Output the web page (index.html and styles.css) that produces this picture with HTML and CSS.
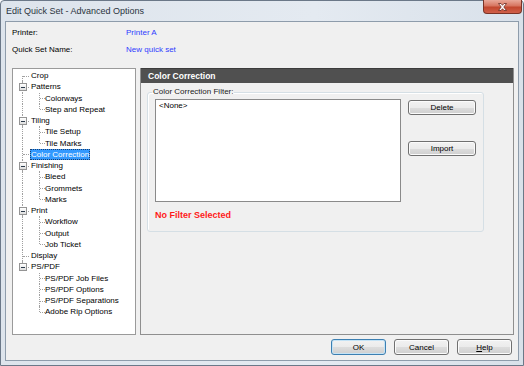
FILE: index.html
```html
<!DOCTYPE html>
<html>
<head>
    <title>Edit Quick Set - Advanced Options</title>
    <link rel="stylesheet" href="styles.css">
</head>
<body>
    <div class="window">
        <div class="titlebar">
            <span class="title">Edit Quick Set - Advanced Options</span>
            <span class="close">
                <svg width="11" height="8" viewBox="0 0 11 8">
                    <path d="M1.5 0.5 L4 0.5 L5.5 2.3 L7 0.5 L9.5 0.5 L6.8 4 L9.5 7.5 L7 7.5 L5.5 5.7 L4 7.5 L1.5 7.5 L4.2 4 Z" fill="#fff" stroke="#6b2a20" stroke-width="0.8"/>
                </svg>
            </span>
        </div>
        <div class="client">
            <div class="info">
                <span>Printer:</span><span class="value">Printer A</span>
                <span>Quick Set Name:</span><span class="value">New quick set</span>
            </div>

            <div class="main">
                <div class="tree">
                    <div class="row"><span class="rail start"></span><span class="label">Crop</span></div>
                    <div class="row"><span class="rail tee"><i class="box"></i></span><span class="label">Patterns</span></div>
                    <div class="row"><span class="rail pass"></span><span class="rail sub tee"></span><span class="label">Colorways</span></div>
                    <div class="row"><span class="rail pass"></span><span class="rail sub end"></span><span class="label">Step and Repeat</span></div>
                    <div class="row"><span class="rail tee"><i class="box"></i></span><span class="label">Tiling</span></div>
                    <div class="row"><span class="rail pass"></span><span class="rail sub tee"></span><span class="label">Tile Setup</span></div>
                    <div class="row"><span class="rail pass"></span><span class="rail sub end"></span><span class="label">Tile Marks</span></div>
                    <div class="row"><span class="rail tee"></span><span class="label selected">Color Correction</span></div>
                    <div class="row"><span class="rail tee"><i class="box"></i></span><span class="label">Finishing</span></div>
                    <div class="row"><span class="rail pass"></span><span class="rail sub tee"></span><span class="label">Bleed</span></div>
                    <div class="row"><span class="rail pass"></span><span class="rail sub tee"></span><span class="label">Grommets</span></div>
                    <div class="row"><span class="rail pass"></span><span class="rail sub end"></span><span class="label">Marks</span></div>
                    <div class="row"><span class="rail tee"><i class="box"></i></span><span class="label">Print</span></div>
                    <div class="row"><span class="rail pass"></span><span class="rail sub tee"></span><span class="label">Workflow</span></div>
                    <div class="row"><span class="rail pass"></span><span class="rail sub tee"></span><span class="label">Output</span></div>
                    <div class="row"><span class="rail pass"></span><span class="rail sub end"></span><span class="label">Job Ticket</span></div>
                    <div class="row"><span class="rail tee"></span><span class="label">Display</span></div>
                    <div class="row"><span class="rail end"><i class="box"></i></span><span class="label">PS/PDF</span></div>
                    <div class="row"><span class="rail"></span><span class="rail sub tee"></span><span class="label">PS/PDF Job Files</span></div>
                    <div class="row"><span class="rail"></span><span class="rail sub tee"></span><span class="label">PS/PDF Options</span></div>
                    <div class="row"><span class="rail"></span><span class="rail sub tee"></span><span class="label">PS/PDF Separations</span></div>
                    <div class="row"><span class="rail"></span><span class="rail sub end"></span><span class="label">Adobe Rip Options</span></div>
                </div>

                <div class="panel">
                    <div class="panel-header">Color Correction</div>
                    <fieldset class="group">
                        <legend>Color Correction Filter:</legend>
                        <div class="group-body">
                            <div class="listbox">&lt;None&gt;</div>
                            <div class="side-buttons">
                                <button class="btn wide">Delete</button>
                                <button class="btn wide import">Import</button>
                            </div>
                        </div>
                        <div class="warning">No Filter Selected</div>
                    </fieldset>
                </div>
            </div>

            <div class="footer">
                <button class="btn default">OK</button>
                <button class="btn">Cancel</button>
                <button class="btn"><u>H</u>elp</button>
            </div>
        </div>
    </div>
</body>
</html>
```

FILE: styles.css
```css
body {
    margin: 0;
    font-family: "Liberation Sans", Arial, sans-serif;
    font-size: 8px;
    color: #000;
}
.window {
    width: 524px;
    height: 366px;
    box-sizing: border-box;
    border: 1px solid #6b7888;
    border-radius: 4px 4px 0 0;
    padding: 0 4px 4px 4px;
    background: linear-gradient(to right, #dde4ec, #e4eaf1 60%, #d9e1ea);
    display: flex;
    flex-direction: column;
}
.titlebar {
    height: 20px;
    display: flex;
    align-items: flex-start;
}
.title {
    font-size: 9px;
    line-height: 20px;
    padding-left: 1px;
    color: #2a3440;
}
.close {
    margin-left: auto;
    margin-top: -1px;
    margin-right: -3px;
    width: 37px;
    height: 13px;
    border: 1px solid #7a3326;
    border-top: none;
    border-radius: 0 0 4px 4px;
    background: linear-gradient(#e9a899, #d77560 45%, #c2472e 55%, #d0604a);
    display: flex;
    align-items: center;
    justify-content: center;
}
.client {
    flex: 1;
    border: 1px solid #8e9cab;
    background-color: #f0f0f0;
    padding: 2px 4px 5px 6px;
    display: flex;
    flex-direction: column;
}
.info {
    display: grid;
    grid-template-columns: 114px auto;
    grid-auto-rows: 17px;
    align-items: center;
}
.value {
    color: #2f3cff;
}
.main {
    margin-top: 10px;
    height: 267px;
    display: flex;
    gap: 4px;
}
.tree {
    width: 124px;
    box-sizing: border-box;
    border: 1px solid #9a9a9a;
    background-color: #fff;
    padding-top: 1px;
}
.row {
    height: 11.25px;
    display: flex;
    align-items: center;
}
.rail {
    position: relative;
    width: 17px;
    height: 100%;
    flex: none;
}
.rail.sub {
    width: 14px;
}
.rail.tee::before,
.rail.pass::before,
.rail.end::before,
.rail.start::before {
    content: "";
    position: absolute;
    left: 9px;
    top: 0;
    bottom: 0;
    border-left: 1px dotted #a0a0a0;
}
.rail.end::before {
    bottom: 50%;
}
.rail.start::before {
    top: 50%;
}
.rail.tee::after,
.rail.end::after,
.rail.start::after {
    content: "";
    position: absolute;
    left: 10px;
    top: 50%;
    width: 6px;
    border-top: 1px dotted #a0a0a0;
}
.rail.sub::after {
    width: 5px;
}
.box {
    position: absolute;
    left: 6px;
    top: 2px;
    width: 6px;
    height: 6px;
    border: 1px solid #949494;
    background: linear-gradient(#ffffff, #dedede);
    z-index: 1;
}
.box::after {
    content: "";
    position: absolute;
    left: 1px;
    right: 1px;
    top: 2.5px;
    height: 1px;
    background-color: #2b3a4a;
}
.label {
    padding: 0 1px;
    line-height: 11px;
    white-space: nowrap;
}
.selected {
    background-color: #3399ff;
    color: #fff;
    outline: 1px dotted #1c3f6e;
    outline-offset: -1px;
}
.panel {
    width: 374px;
    box-sizing: border-box;
    border: 1px solid #8f8f8f;
    border-top: none;
}
.panel-header {
    height: 15px;
    line-height: 14px;
    background-color: #505050;
    border-top: 1px solid #3c3c3c;
    box-sizing: border-box;
    color: #fff;
    font-weight: bold;
    font-size: 8.5px;
    padding-left: 7px;
}
.group {
    margin: 4px 30px 0 6px;
    padding: 2px 7px 10px 7px;
    border: 1px solid #d5dfe5;
    border-radius: 3px;
    box-shadow: inset 1px 1px 0 #fff;
}
.group legend {
    margin-left: -3px;
    padding: 0 1px;
    line-height: 10px;
    color: #1a1a1a;
}
.group-body {
    display: flex;
    gap: 7px;
}
.listbox {
    width: 246px;
    height: 103px;
    box-sizing: border-box;
    border: 1px solid #8a8a8a;
    background-color: #fff;
    padding: 1px 3px;
    line-height: 10px;
}
.side-buttons {
    display: flex;
    flex-direction: column;
    padding-top: 1px;
}
.import {
    margin-top: 26px;
}
.warning {
    margin-top: 7px;
    line-height: 12px;
    color: #ff1a1a;
    font-weight: bold;
    font-size: 9px;
}
.btn {
    width: 55px;
    height: 16px;
    padding: 0;
    font-family: "Liberation Sans", Arial, sans-serif;
    font-size: 8px;
    color: #000;
    border: 1px solid #707070;
    border-radius: 3px;
    background: linear-gradient(#f2f2f2, #ebebeb 50%, #dddddd 51%, #cfcfcf);
    box-shadow: inset 0 0 0 1px #fbfbfb;
}
.btn.wide {
    width: 68px;
    height: 15px;
}
.btn.default {
    border-color: #3c7fb1;
    box-shadow: inset 0 0 0 1px #c4e3f6;
}
.footer {
    margin-top: 4px;
    padding-right: 2px;
    display: flex;
    justify-content: flex-end;
    gap: 8px;
}
```
